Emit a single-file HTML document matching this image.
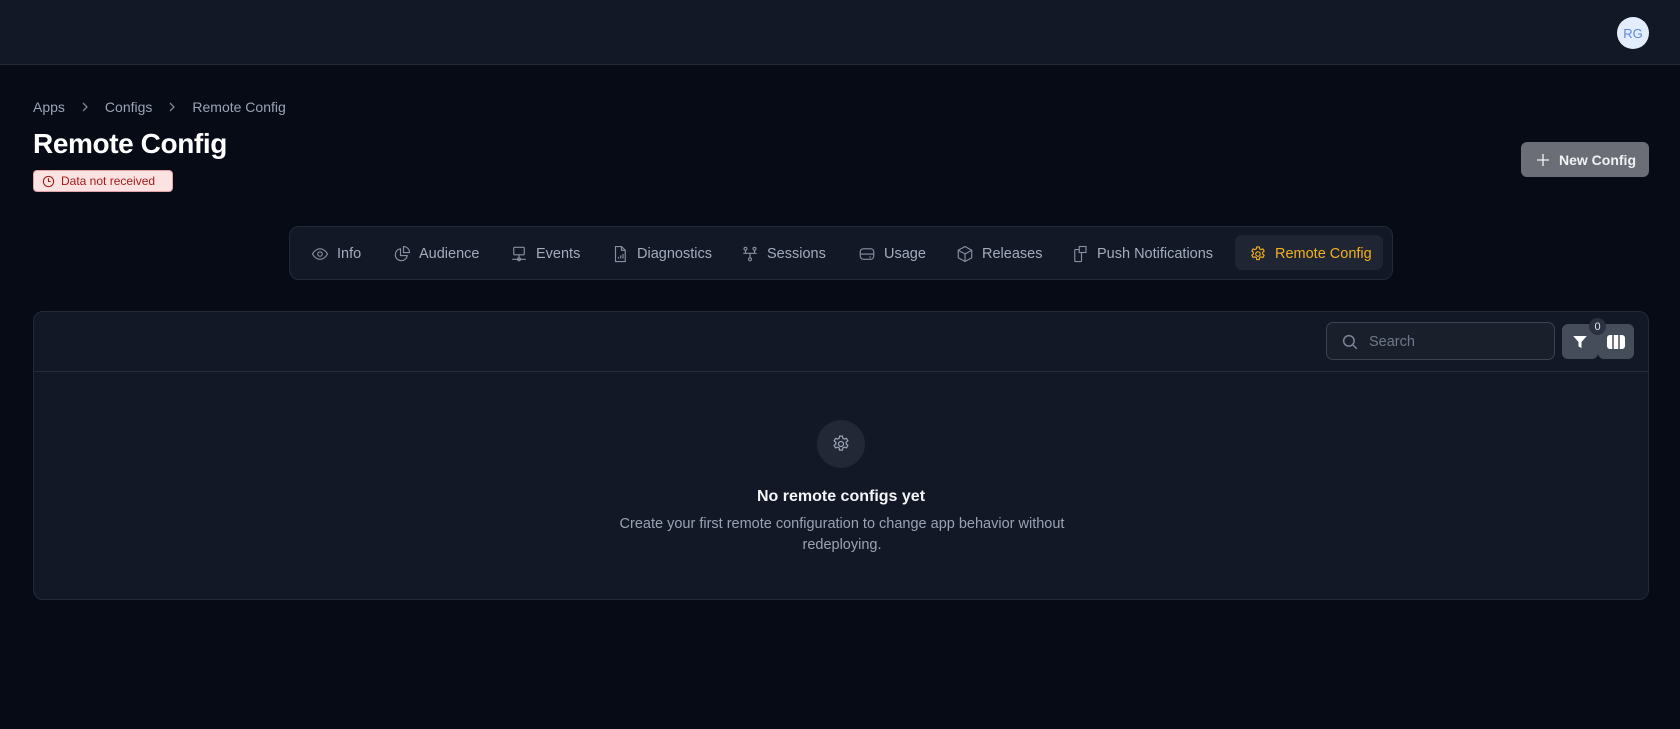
<!DOCTYPE html>
<html><head><meta charset="utf-8"><style>
*{box-sizing:border-box;margin:0;padding:0}
body{width:1680px;height:729px;background:#070b16;font-family:"Liberation Sans",sans-serif;position:relative;overflow:hidden;color:#fff}
.hdr{position:absolute;left:0;top:0;width:1680px;height:65px;background:#131826;border-bottom:1px solid #232938}
.av{position:absolute;left:1617px;top:17px;width:32px;height:32px;border-radius:50%;background:#e3edfd;color:#5f86e8;font-size:13px;display:flex;align-items:center;justify-content:center}
.bc{position:absolute;left:33px;top:99px;font-size:14px;color:#9aa4b6;display:flex;align-items:center}
.bc svg{margin:0 15px}
h1{position:absolute;left:33px;top:128px;font-size:28px;font-weight:700;letter-spacing:-0.4px}
.badge{position:absolute;left:33px;top:170px;width:140px;height:22px;background:#fde2e2;border:1px solid #e3a2a8;border-radius:4px;color:#a61b1b;font-size:12px;display:flex;align-items:center;padding-left:8px;gap:6px}
.btn{position:absolute;left:1521px;top:142px;width:128px;height:35px;background:#6b6e76;border-radius:6px;font-size:14px;font-weight:700;color:#f1f2f4;display:flex;align-items:center;padding-left:14px;gap:8px}
.tabs{position:absolute;left:289px;top:226px;width:1104px;height:54px;background:#131826;border:1px solid #232938;border-radius:10px}
.tab{position:absolute;top:1px;height:52px;display:flex;align-items:center;font-size:14.5px;color:#a3acbd}
.tab svg{width:18px;height:18px;margin-right:8px;stroke:#8790a2;fill:none;stroke-width:1.5}
.act{position:absolute;left:945px;top:8px;width:148px;height:35px;background:#1f2533;border-radius:7px}
.card{position:absolute;left:33px;top:311px;width:1616px;height:289px;background:#131826;border:1px solid #232938;border-radius:10px}
.cardh{position:absolute;left:0;top:59px;width:100%;height:1px;background:#252b3a}
.search{position:absolute;left:1292px;top:10px;width:229px;height:38px;border:1px solid #3b4252;border-radius:7px;background:#1a1f2c;display:flex;align-items:center;padding-left:14px;gap:10px;font-size:14.5px;color:#6f7889;padding-top:2px}
.ib{position:absolute;top:12px;width:36px;height:35px;background:#454c5a;border-radius:6px;display:flex;align-items:center;justify-content:center}
.cnt{position:absolute;left:1555px;top:6px;width:17px;height:17px;border-radius:50%;background:#2b3140;font-size:11px;color:#dfe3ea;display:flex;align-items:center;justify-content:center}
.ec{position:absolute;left:783px;top:108px;width:48px;height:48px;border-radius:50%;background:#222836;display:flex;align-items:center;justify-content:center}
.et{position:absolute;left:0;width:100%;text-align:center;top:176px;font-size:16px;font-weight:700;color:#f4f5f7}
.ed{position:absolute;left:583px;width:450px;text-align:center;top:202px;font-size:14.5px;line-height:21px;color:#9aa3b3}
</style></head><body>
<div class="hdr"><div class="av">RG</div></div>
<div class="bc"><span>Apps</span><svg width="10" height="10" viewBox="0 0 10 10" fill="none" stroke="#7b8496" stroke-width="1.3"><path d="M3 1l4 4-4 4"/></svg><span>Configs</span><svg width="10" height="10" viewBox="0 0 10 10" fill="none" stroke="#7b8496" stroke-width="1.3"><path d="M3 1l4 4-4 4"/></svg><span>Remote Config</span></div>
<h1>Remote Config</h1>
<div class="badge"><svg width="13" height="13" viewBox="0 0 24 24" fill="none" stroke="#a61b1b" stroke-width="2"><circle cx="12" cy="12" r="9.5"/><path d="M12 6v6h4"/></svg>Data not received</div>
<div class="btn"><svg width="16" height="16" viewBox="0 0 24 24" stroke="#f1f2f4" stroke-width="2"><path d="M12 3v18M3 12h18"/></svg>New Config</div>
<div class="tabs">
<div class="act"></div>
<div class="tab" style="left:21px"><svg viewBox="0 0 24 24"><path d="M2 12s3.5-7 10-7 10 7 10 7-3.5 7-10 7S2 12 2 12z"/><circle cx="12" cy="12" r="3"/></svg>Info</div>
<div class="tab" style="left:103px"><svg viewBox="0 0 24 24"><path d="M10 5a8 8 0 1 0 9 9h-9z"/><path d="M14 2v8h8a8 8 0 0 0-8-8z"/></svg>Audience</div>
<div class="tab" style="left:220px"><svg viewBox="0 0 24 24"><rect x="5" y="3" width="14" height="10" rx="1"/><path d="M12 13v4M3 19h18"/><circle cx="12" cy="19" r="2"/></svg>Events</div>
<div class="tab" style="left:321px"><svg viewBox="0 0 24 24"><path d="M6 2h8l5 5v15H6z"/><path d="M14 2v5h5M10 18v-2M13 18v-4M16 18v-6"/></svg>Diagnostics</div>
<div class="tab" style="left:451px"><svg viewBox="0 0 24 24"><circle cx="6" cy="5" r="2"/><circle cx="18" cy="5" r="2"/><path d="M3 11h18M6 7v4M18 7v4M12 11v6"/><circle cx="12" cy="19" r="2"/></svg>Sessions</div>
<div class="tab" style="left:568px"><svg viewBox="0 0 24 24"><rect x="3" y="5" width="18" height="14" rx="4"/><path d="M3 12h18M15 16h2"/></svg>Usage</div>
<div class="tab" style="left:666px"><svg viewBox="0 0 24 24"><path d="M12 2l9 5v10l-9 5-9-5V7z"/><path d="M3 7l9 5 9-5M12 12v10"/></svg>Releases</div>
<div class="tab" style="left:781px"><svg viewBox="0 0 24 24"><rect x="5" y="6" width="9" height="16" rx="1"/><rect x="11" y="2" width="9" height="8" fill="#131826"/></svg>Push Notifications</div>
<div class="tab" style="left:959px;color:#f2b01e"><svg viewBox="0 0 24 24" style="stroke:#f2b01e"><path d="M10.3 2.5h3.4l.5 2.6 1.8 1 2.5-.9 1.7 2.9-2 1.8v2.1l2 1.8-1.7 2.9-2.5-.9-1.8 1-.5 2.6h-3.4l-.5-2.6-1.8-1-2.5.9-1.7-2.9 2-1.8V9.9l-2-1.8 1.7-2.9 2.5.9 1.8-1z"/><circle cx="12" cy="12" r="3"/></svg>Remote Config</div>
</div>
<div class="card">
<div class="search"><svg width="18" height="18" viewBox="0 0 24 24" fill="none" stroke="#7b8496" stroke-width="2"><circle cx="10.5" cy="10.5" r="7"/><path d="M16 16l5 5"/></svg>Search</div>
<div class="ib" style="left:1528px"><svg width="18" height="18" viewBox="0 0 24 24"><path d="M3 4h18l-7 8v8l-4 -2v-6z" fill="#fff"/></svg></div>
<div class="ib" style="left:1564px"><svg width="18" height="16" viewBox="0 0 18 16"><rect x="0" y="1" width="18" height="14" rx="3" fill="#fff"/><path d="M6 1v14M12 1v14" stroke="#454c5a" stroke-width="1.5"/></svg></div>
<div class="cnt">0</div>
<div class="cardh"></div>
<div class="ec"><svg width="20" height="20" viewBox="0 0 24 24" fill="none" stroke="#9aa3b3" stroke-width="1.5"><path d="M10.3 2.5h3.4l.5 2.6 1.8 1 2.5-.9 1.7 2.9-2 1.8v2.1l2 1.8-1.7 2.9-2.5-.9-1.8 1-.5 2.6h-3.4l-.5-2.6-1.8-1-2.5.9-1.7-2.9 2-1.8V9.9l-2-1.8 1.7-2.9 2.5.9 1.8-1z"/><circle cx="12" cy="12" r="3"/></svg></div>
<div class="et">No remote configs yet</div>
<div class="ed">Create your first remote configuration to change app behavior without redeploying.</div>
</div>
</body></html>
